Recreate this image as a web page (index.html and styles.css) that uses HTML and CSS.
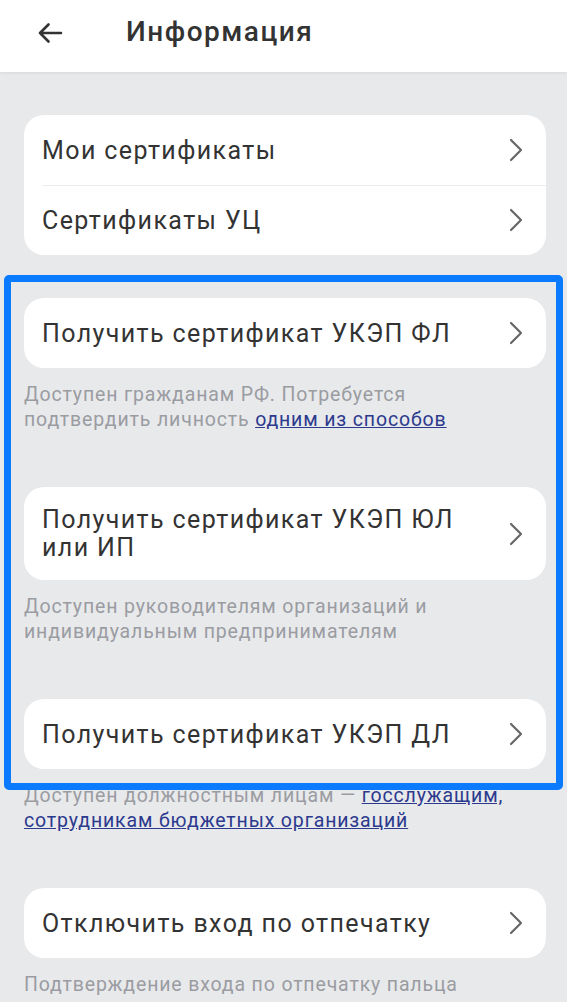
FILE: index.html
```html
<!DOCTYPE html>
<html lang="ru">
<head>
<meta charset="utf-8">
<title>Информация</title>
<link rel="stylesheet" href="styles.css">
</head>
<body>
<header class="topbar">
  <svg class="back" width="26" height="22" viewBox="0 0 26 22"><path d="M24 11H3M11.5 2.5L3 11l8.5 8.5" fill="none" stroke="#333" stroke-width="2.6" stroke-linecap="round" stroke-linejoin="round"/></svg>
  <h1 class="title">Информация</h1>
</header>
<main class="content">
  <section class="card">
    <div class="row"><span class="label">Мои сертификаты</span><svg class="chev" width="14" height="24" viewBox="0 0 14 24"><path d="M2 2l10 10-10 10" fill="none" stroke="#666" stroke-width="2.2" stroke-linecap="round" stroke-linejoin="round"/></svg></div>
    <div class="row divided"><span class="label">Сертификаты УЦ</span><svg class="chev" width="14" height="24" viewBox="0 0 14 24"><path d="M2 2l10 10-10 10" fill="none" stroke="#666" stroke-width="2.2" stroke-linecap="round" stroke-linejoin="round"/></svg></div>
  </section>

  <div class="group">
    <section class="card"><div class="row"><span class="label">Получить сертификат УКЭП ФЛ</span><svg class="chev" width="14" height="24" viewBox="0 0 14 24"><path d="M2 2l10 10-10 10" fill="none" stroke="#666" stroke-width="2.2" stroke-linecap="round" stroke-linejoin="round"/></svg></div></section>
    <p class="caption">Доступен гражданам РФ. Потребуется подтвердить личность <a href="#">одним из способов</a></p>
  </div>

  <div class="group">
    <section class="card"><div class="row tall"><span class="label">Получить сертификат УКЭП ЮЛ или ИП</span><svg class="chev" width="14" height="24" viewBox="0 0 14 24"><path d="M2 2l10 10-10 10" fill="none" stroke="#666" stroke-width="2.2" stroke-linecap="round" stroke-linejoin="round"/></svg></div></section>
    <p class="caption">Доступен руководителям организаций и индивидуальным предпринимателям</p>
  </div>

  <div class="group">
    <section class="card"><div class="row"><span class="label">Получить сертификат УКЭП ДЛ</span><svg class="chev" width="14" height="24" viewBox="0 0 14 24"><path d="M2 2l10 10-10 10" fill="none" stroke="#666" stroke-width="2.2" stroke-linecap="round" stroke-linejoin="round"/></svg></div></section>
    <p class="caption">Доступен должностным лицам — <a href="#">госслужащим, сотрудникам бюджетных организаций</a></p>
  </div>

  <div class="group">
    <section class="card"><div class="row"><span class="label">Отключить вход по отпечатку</span><svg class="chev" width="14" height="24" viewBox="0 0 14 24"><path d="M2 2l10 10-10 10" fill="none" stroke="#666" stroke-width="2.2" stroke-linecap="round" stroke-linejoin="round"/></svg></div></section>
    <p class="caption">Подтверждение входа по отпечатку пальца</p>
  </div>
</main>
<div class="highlight"></div>
</body>
</html>
```
FILE: styles.css
```css
html, body {
  margin: 0;
  padding: 0;
}
body {
  background: #e8e9eb;
  font-family: Roboto, "Noto Sans", sans-serif;
  color: #333;
  height: 1002px;
  overflow: hidden;
  position: relative;
}
.topbar {
  height: 72px;
  box-sizing: border-box;
  padding-bottom: 9px;
  background: #fff;
  display: flex;
  align-items: center;
  box-shadow: 0 1px 3px rgba(0,0,0,0.08);
  position: relative;
  z-index: 1;
}
.back {
  margin-left: 37px;
  margin-top: 2px;
}
.title {
  margin: 0 0 0 63px;
  font-size: 28px;
  font-weight: 500;
  color: #333;
  letter-spacing: 1.5px;
}
.content {
  padding: 43px 21px 0 24px;
  display: flex;
  flex-direction: column;
}
.card {
  background: #fff;
  border-radius: 20px;
  overflow: hidden;
}
.content > .card {
  margin-bottom: 43px;
}
.group {
  margin-bottom: 55px;
}
.row {
  display: flex;
  align-items: center;
  justify-content: space-between;
  height: 70px;
  padding: 0 23px 0 18px;
  box-sizing: border-box;
  font-size: 25px;
  letter-spacing: 1.4px;
  position: relative;
}
.row.divided::before {
  content: "";
  position: absolute;
  top: 0;
  left: 18px;
  right: 0;
  height: 1px;
  background: #ececec;
}
.row.tall {
  height: 93px;
  line-height: 28px;
}
.row.tall .label {
  max-width: 430px;
}
.chev {
  flex: none;
}
.caption {
  margin: 14px 0 0;
  font-size: 19.5px;
  line-height: 25px;
  letter-spacing: 0.85px;
  color: #9a9ca2;
  padding-right: 34px;
}
.caption a {
  color: #2c3a8e;
  text-decoration: underline;
}
.highlight {
  position: absolute;
  left: 4px;
  top: 275px;
  width: 559px;
  height: 515px;
  box-sizing: border-box;
  border: 7px solid #0a7bff;
  border-radius: 5px;
  pointer-events: none;
}
```
